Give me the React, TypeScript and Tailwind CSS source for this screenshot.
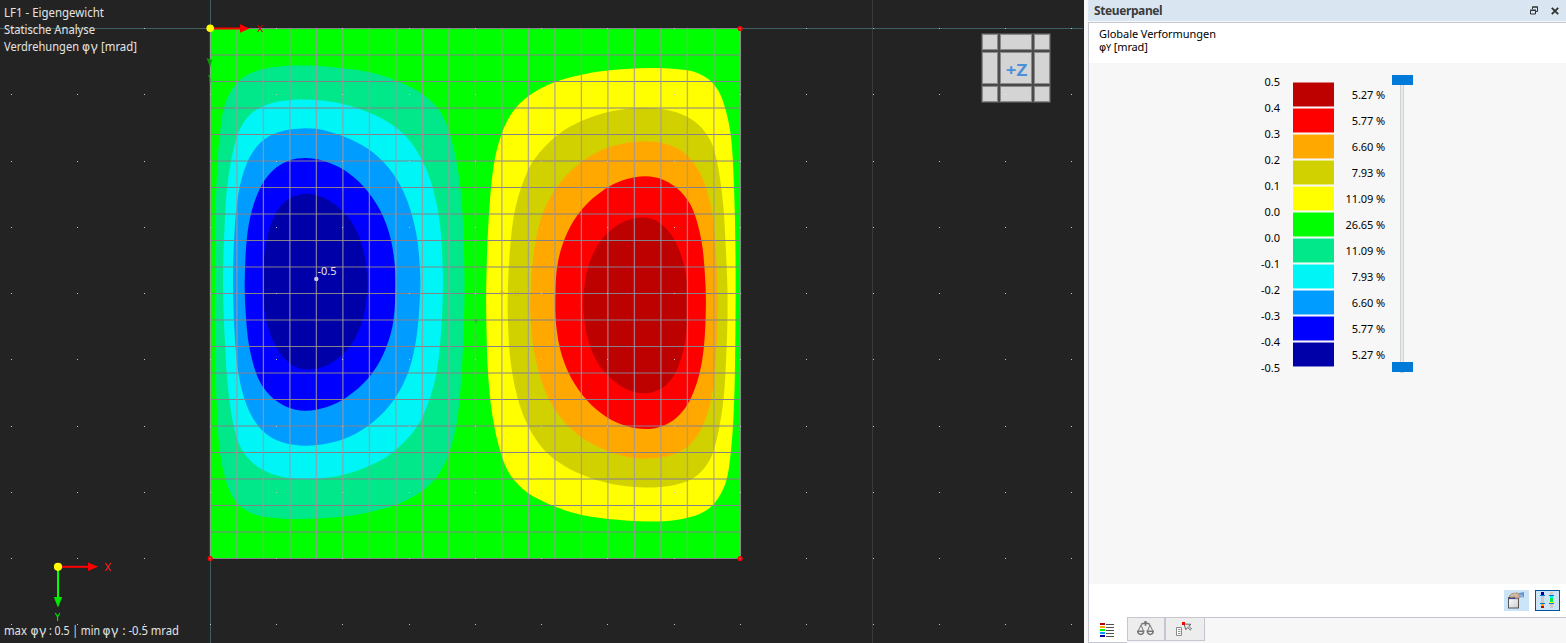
import React from "react";

type Pt = [number, number];

const CONTOURS: { cold: string; warm: string; pts: Pt[] }[] = [
  {
    cold: "#00e88a",
    warm: "#ffff00",
    pts: [
      [215, 290], [215.6, 220], [217, 172], [220, 133], [225, 104], [236, 84], [250, 73.5], [273, 67.3], [302, 65.5], [333, 67.2],
      [370, 72.3], [397, 81], [423, 94.3], [440, 111.5], [449.5, 133], [458, 170], [462.5, 213], [464.3, 267],
      [464.3, 305], [462, 367], [457, 421], [449, 453], [438, 475], [422, 491], [397, 504.5], [370, 512], [343, 516.5],
      [300, 519], [263, 516.7], [248, 511.5], [237, 503], [228, 487], [220, 453], [216.6, 400], [215.2, 340],
    ],
  },
  {
    cold: "#00f6f6",
    warm: "#d1d100",
    pts: [
      [223, 285], [224.6, 225], [228, 180], [237, 136], [247, 118], [260, 107.5], [280, 101.2], [305, 99.5], [333, 102],
      [360, 109], [387, 121.5], [407, 137.5], [423, 162], [433, 189], [440, 225], [442.7, 267], [442.7, 297],
      [440.6, 338], [435, 380], [422, 418], [407, 439], [387, 456.5], [363, 468.5], [338, 476], [307, 479.2],
      [283, 477], [263, 470], [248, 458], [237, 439], [228.5, 393], [225, 343],
    ],
  },
  {
    cold: "#009cff",
    warm: "#ffa800",
    pts: [
      [233, 285], [234.2, 237], [238.5, 193], [247, 163], [260, 143], [278, 132.3], [305, 128.3], [325, 130.5], [350, 139],
      [373, 152.5], [393, 173.5], [407, 200], [416.5, 235], [420, 270], [420, 295], [416.5, 337], [408, 373],
      [393, 401], [373, 422], [350, 436.5], [327, 443.5], [305, 445.7], [283, 442.5], [265, 433], [250, 413],
      [240, 382], [235, 340],
    ],
  },
  {
    cold: "#0000ff",
    warm: "#ff0000",
    pts: [
      [244.7, 282], [246.7, 240], [252, 210], [262, 184.5], [275, 168.5], [290, 160.3], [305, 158], [323, 160.7],
      [343, 169.3], [363, 186], [380, 210], [390.5, 238], [395.2, 270], [395.5, 293], [392.5, 326], [383, 355],
      [368, 378.5], [347, 397], [327, 407], [305, 410.7], [287, 407], [270, 395.5], [258, 378], [249.3, 347],
      [245.7, 313],
    ],
  },
  {
    cold: "#0000a8",
    warm: "#bd0000",
    pts: [
      [262.8, 283], [264.5, 252], [270, 227], [278, 209.5], [290, 198], [307, 193.7], [325, 198.3], [343, 211.5],
      [355, 228], [363.3, 250], [367.3, 278], [366.8, 296], [362.5, 320], [353.5, 341], [341.5, 355.5], [325, 366],
      [307, 369.4], [292, 365], [278.5, 351], [270, 333], [264.5, 312],
    ],
  },
];

function smooth(p: Pt[]): string {
  const n = p.length;
  const at = (i: number) => p[(i + n) % n];
  const dist = (u: Pt, v: Pt) => Math.hypot(u[0] - v[0], u[1] - v[1]);
  let d = `M${p[0][0]} ${p[0][1]}`;
  for (let i = 0; i < n; i++) {
    const a = at(i - 1), b = at(i), c = at(i + 1), e = at(i + 2);
    const ab = dist(a, b), bc = dist(b, c), ce = dist(c, e);
    const k1 = bc / (ab + bc) / 3, k2 = bc / (bc + ce) / 3;
    d += `C${b[0] + (c[0] - a[0]) * k1} ${b[1] + (c[1] - a[1]) * k1} ${c[0] - (e[0] - b[0]) * k2} ${c[1] - (e[1] - b[1]) * k2} ${c[0]} ${c[1]}`;
  }
  return d + "Z";
}

const PATHS = CONTOURS.map((c) => ({ ...c, d: smooth(c.pts) }));
const GRID = Array.from({ length: 21 }, (_, i) => i);
const DOTS_X = Array.from({ length: 17 }, (_, i) => Math.round(11 + i * 66.27));
const DOTS_Y = Array.from({ length: 10 }, (_, i) => Math.round(28 + i * 66.27));

function Cube() {
  const cols = [[983, 14], [1001, 30], [1035, 14]];
  const rows = [[35, 14], [53, 30], [87, 14]];
  return (
    <g>
      <rect x="981" y="33" width="70" height="70" rx="1" fill="#4a4a4a" />
      {cols.map(([x, w]) =>
        rows.map(([y, h]) => (
          <rect key={`${x}-${y}`} x={x - 0.5} y={y - 0.5} width={w + 1} height={h + 1} fill="#d4d4d4" stroke="#8a8a8a" strokeWidth="1" />
        ))
      )}
      <rect x="1005" y="94" width="1" height="1" fill="#f4f4f4" />
      <text x="1005.8" y="75.5" fontSize="16" fontWeight="700" fontFamily="'Noto Sans', sans-serif" fill="#4a90d9" textLength="21.5" lengthAdjust="spacingAndGlyphs">+Z</text>
    </g>
  );
}

function Label({ x, y, w, children }: { x: number; y: number; w: number; children: string }) {
  return <text x={x} y={y} textLength={w} lengthAdjust="spacingAndGlyphs">{children}</text>;
}

function PhiGamma({ x, y }: { x: number; y: number }) {
  return (
    <>
      <text x={x} y={y} fontFamily="'DejaVu Sans', sans-serif" fontSize="12" textLength="8" lengthAdjust="spacingAndGlyphs">φ</text>
      <text x={x + 8.8} y={y} textLength="7" lengthAdjust="spacingAndGlyphs">γ</text>
    </>
  );
}

function ModelView() {
  return (
    <svg className="block h-[643px] w-[1084px]" viewBox="0 0 1084 643">
      <rect width="1084" height="643" fill="#232323" />
      <path d="M0 28.5H1083" stroke="#3f6060" />
      <path d="M210.5 0V643" stroke="#3f5c5c" />
      <path d="M872.5 0V643" stroke="#3a3a3a" />
      <rect x="210" y="28.5" width="530.5" height="530" fill="#00ff00" />
      {PATHS.map((c) => (
        <g key={c.cold}>
          <path d={c.d} fill={c.cold} />
          <path d={c.d} fill={c.warm} transform="rotate(180 475.3 293.5)" />
        </g>
      ))}
      <g stroke="#85808a">
        {GRID.map((i) => (
          <path key={i} d={`M210 ${28.5 + i * 26.5}H740.5`} />
        ))}
      </g>
      <g stroke="#a096a2" strokeWidth="1.3" strokeOpacity="0.78">
        {GRID.map((i) => (
          <path key={i} d={`M${210.4 + i * 26.5} 28V559`} />
        ))}
      </g>
      <g fill="#c4c4c4">
        {DOTS_X.map((x) => DOTS_Y.map((y) => <rect key={`${x}-${y}`} x={x} y={y} width="1" height="1" />))}
      </g>

      <g fill="#c06060" stroke="#ff0000" strokeWidth="1.7">
        <circle cx="740.2" cy="28.5" r="1.7" />
        <circle cx="740.2" cy="558.5" r="1.7" />
        <circle cx="210.2" cy="558.5" r="1.7" />
      </g>

      <path d="M206.5 58L212 60L210 67Z" fill="#079b07" />
      <path d="M208.5 75L210 78V82" stroke="#00b900" fill="none" />
      <path d="M473.5 319L478 320L476 324Z" fill="#2ca52c" opacity=".7" />
      <path d="M474 334L476 338L478 334M476 338V341" stroke="#55b846" fill="none" opacity=".6" />
      <path d="M501 291L505 293L501 295ZM515 291L519 296M519 291L515 296" fill="#c6ad20" stroke="#c6ad20" opacity=".6" />

      <path d="M212 28.5H242" stroke="#ff0000" strokeWidth="2" />
      <path d="M240 24.3L249.5 28.5L240 32.7Z" fill="#ff0000" />
      <path d="M257.5 25L262.5 32M262.5 25L257.5 32" stroke="#e00000" strokeWidth="1.1" />
      <circle cx="210.2" cy="28.3" r="3.8" fill="#ffff00" />

      <path d="M60 566.8H90" stroke="#ff0000" strokeWidth="2" />
      <path d="M88 562.5L98 566.8L88 571Z" fill="#ff0000" />
      <path d="M58 570V600" stroke="#00ff00" strokeWidth="2" />
      <path d="M53.8 597H62.2L58 607.5Z" fill="#00e800" />
      <circle cx="58" cy="566.8" r="4.1" fill="#ffff00" />
      <path d="M105.5 563L110.8 571M110.8 563L105.5 571" stroke="#ff2020" strokeWidth="1.1" />
      <path d="M55.3 613L57.6 617L59.8 613M57.6 617V621" stroke="#00e800" strokeWidth="1.1" fill="none" />

      <circle cx="316.3" cy="279" r="2.2" fill="#d7c6e0" />
      <g fontFamily="'Noto Sans', sans-serif" fontSize="12" fill="#e4e4e4">
        <text x="317.5" y="275" fontSize="11" textLength="19" lengthAdjust="spacingAndGlyphs">-0.5</text>
        <Label x={4} y={17} w={100}>LF1 - Eigengewicht</Label>
        <Label x={4} y={34} w={91}>Statische Analyse</Label>
        <Label x={4} y={51} w={75}>Verdrehungen</Label>
        <PhiGamma x={82} y={51} />
        <Label x={101} y={51} w={36}>[mrad]</Label>
        <Label x={4} y={635} w={23}>max</Label>
        <PhiGamma x={30.5} y={635} />
        <Label x={49} y={635} w={51}>: 0.5 | min</Label>
        <PhiGamma x={102.5} y={635} />
        <Label x={122.5} y={635} w={56.5}>: -0.5 mrad</Label>
      </g>
      <Cube />
    </svg>
  );
}

const BANDS = [
  { from: "0.5", pct: "5.27 %", fill: "bg-[#bd0000]" },
  { from: "0.4", pct: "5.77 %", fill: "bg-[#ff0000]" },
  { from: "0.3", pct: "6.60 %", fill: "bg-[#ffa800]" },
  { from: "0.2", pct: "7.93 %", fill: "bg-[#d1d100]" },
  { from: "0.1", pct: "11.09 %", fill: "bg-[#ffff00]" },
  { from: "0.0", pct: "26.65 %", fill: "bg-[#00ff00]" },
  { from: "0.0", pct: "11.09 %", fill: "bg-[#00e88a]" },
  { from: "-0.1", pct: "7.93 %", fill: "bg-[#00f6f6]" },
  { from: "-0.2", pct: "6.60 %", fill: "bg-[#009cff]" },
  { from: "-0.3", pct: "5.77 %", fill: "bg-[#0000ff]" },
  { from: "-0.4", pct: "5.27 %", fill: "bg-[#0000a8]" },
];

function Legend() {
  return (
    <div className="flex pl-[161px] pt-3 text-[11px] leading-[26px]">
      <div className="-mt-[6px] w-[30px] text-right">
        {BANDS.map((b, i) => (
          <div key={i} className="h-[26px]">{b.from}</div>
        ))}
        <div className="h-[26px]">-0.5</div>
      </div>
      <div className="ml-[13px] mt-[7px] w-[41px]">
        {BANDS.map((b, i) => (
          <div key={i} className={`mb-px h-[25px] border-y border-white/50 ${b.fill}`} />
        ))}
      </div>
      <div className="mt-[7px] w-[51px] text-right tracking-[-0.1px]">
        {BANDS.map((b, i) => (
          <div key={i} className="h-[26px]">{b.pct}</div>
        ))}
      </div>
      <div className="ml-[7px] flex h-[298px] w-[21px] flex-col items-center">
        <div className="h-[10px] w-full shrink-0 bg-[#007ad9]" />
        <div className="mr-px w-1 flex-1 border-x border-[#cfd3d3] bg-[#e6eaea]" />
        <div className="h-[10px] w-full shrink-0 bg-[#007ad9]" />
        <div className="mr-px h-px w-1 bg-[#cfd3d3]" />
      </div>
    </div>
  );
}

function BandsIcon() {
  const c = ["#b80000", "#ffa800", "#00ff00", "#009cff", "#0000a8"];
  return (
    <svg className="h-[15px] w-[14px]" viewBox="0 0 14 15" shapeRendering="crispEdges">
      {c.map((f, i) => (
        <g key={f}>
          <rect x="0" y={i * 3} width="5" height="2" fill={f} />
          <rect x="6" y={i * 3 + 1} width="8" height="1" fill="#505050" />
        </g>
      ))}
    </svg>
  );
}

function ScalesIcon() {
  return (
    <svg className="h-[16px] w-[17px]" viewBox="0 0 17 16" fill="none" stroke="#777">
      <path d="M8.5 0V5M4 3.5C6 1.8 11 1.8 13 3.5" strokeWidth="1.5" />
      <path d="M4 4L1.2 10M4 4L6.5 10M13 4L10.5 10M13 4L15.8 10" strokeWidth="1" />
      <path d="M.6 10.2H6.8C6.3 14.5 1.2 14.5 .6 10.2ZM10.2 10.2H16.4C15.8 14.5 10.8 14.5 10.2 10.2Z" strokeWidth="1.4" />
      <circle cx="8.5" cy="1.4" r="1.3" fill="#777" stroke="none" />
    </svg>
  );
}

function PickIcon() {
  return (
    <svg className="h-[15px] w-[16px]" viewBox="0 0 16 15" fill="none">
      <path d="M.5 5.5H5.5V13.5H.5Z" fill="#fff" stroke="#8a8a8a" />
      <path d="M2 7.5H4.5M2 9.5H4.5M2 11.5H4.5" stroke="#777" strokeWidth=".8" />
      <path d="M8 2L15 2.3L12.8 4.2L15.5 6.9L14.3 8L11.6 5.5L9.8 7.7Z" fill="#e6e6e6" stroke="#666" />
      <rect x="6" y="0" width="3" height="3" fill="#ff0000" />
    </svg>
  );
}

function HandIcon() {
  return (
    <svg className="h-[17px] w-[17px]" viewBox="0 0 17 17">
      <defs>
        <linearGradient id="sheet" x2="1" y2="1">
          <stop stopColor="#fff" />
          <stop offset="1" stopColor="#ccc" />
        </linearGradient>
      </defs>
      <rect x=".5" y="5.5" width="10" height="10.5" fill="url(#sheet)" stroke="#555" />
      <path d="M1 6.5H10" stroke="#4442a4" strokeWidth="1.2" />
      <path d="M1 4L4 1.5L9 .8L13 2.5L12 5.5L8 7L6.5 5L3 5.7Z" fill="#c4ab95" stroke="#8b7767" strokeWidth=".5" />
      <path d="M3 4L6.5 2.8L9.5 4.5M6 1.8L9.5 3" stroke="#e0cab5" fill="none" strokeWidth=".8" />
      <path d="M11 1L16 0V5.5L12 5Z" fill="#6795ce" />
      <path d="M12 3L15 4.5" stroke="#b8cde7" />
    </svg>
  );
}

function RangeIcon() {
  return (
    <svg className="h-[17px] w-[17px]" viewBox="0 0 17 17" shapeRendering="crispEdges">
      <rect x="2" y="0" width="3" height="3" fill="#000099" />
      <rect x="2" y="3" width="3" height="9" fill="#cacaca" />
      <rect x="2" y="12" width="3" height="2" fill="#ffa800" />
      <rect x="2" y="14" width="3" height="2" fill="#bd0000" />
      <rect x="1" y="3" width="5" height="1" fill="#0078c8" />
      <rect x="1" y="11" width="5" height="1" fill="#0078c8" />
      <rect x="11" y="0" width="3" height="16" fill="#cacaca" />
      <rect x="11" y="4" width="3" height="2" fill="#00eeee" />
      <rect x="11" y="6" width="3" height="4" fill="#00ee40" />
      <rect x="11" y="10" width="3" height="1" fill="#ffff00" />
      <rect x="10" y="3" width="5" height="1" fill="#0078c8" />
      <rect x="10" y="11" width="5" height="1" fill="#0078c8" />
    </svg>
  );
}

function ControlPanel() {
  return (
    <aside className="flex h-full flex-1 flex-col text-black">
      <header className="mb-px flex h-[21px] shrink-0 items-center bg-[#d9e6f2] pl-[6px] pr-[7px] text-[#3b3b3b]">
        <h1 className="flex-1 text-[12px] font-bold leading-[21px] tracking-[-0.4px]">Steuerpanel</h1>
        <svg className="mr-[13px] h-[9px] w-[8px]" viewBox="0 0 8 9" fill="none" stroke="#303030">
          <path d="M2.5 3V1H7.5V5.5H6M2 1H8" />
          <path d="M.5 4.5H5.5V8H.5ZM0 4H6" />
        </svg>
        <svg className="h-2 w-2" viewBox="0 0 8 8" stroke="#303030" strokeWidth="1.8">
          <path d="M.8 .8L7.2 7.2M7.2 .8L.8 7.2" />
        </svg>
      </header>
      <div className="flex min-h-0 flex-1 flex-col border-l border-t border-[#c6c6d0]">
        <div className="h-[40px] shrink-0 bg-white pl-[10px] pt-[4px] text-[11px] leading-[13px]">
          <div className="tracking-[-0.06px]">Globale Verformungen</div>
          <div className="tracking-[-0.15px]"><span className="font-['DejaVu_Sans',sans-serif] leading-none">φ</span><span className="text-[9px] leading-none">Y</span> [mrad]</div>
        </div>
        <div className="h-[521px] shrink-0 bg-[#f7f7f7]">
          <Legend />
        </div>
        <div className="flex h-[33px] shrink-0 items-center justify-end gap-[6px] bg-white pr-[6px]">
          <button className="flex h-[21px] w-[25px] items-center justify-center bg-[#cce4f7]"><HandIcon /></button>
          <button className="flex h-[21px] w-[25px] items-center justify-center border border-[#005499] bg-[#cce4f7]"><RangeIcon /></button>
        </div>
        <nav className="flex flex-1 items-start bg-[#f7f7f7]">
          <button className="flex h-[26px] w-[38px] items-center justify-center border-b border-[#c6c6d0] bg-white pr-[2px] pt-px"><BandsIcon /></button>
          <button className="flex h-[24px] w-[38px] items-center justify-center border border-[#c6c6d0] bg-[#ededed] pr-[2px]"><ScalesIcon /></button>
          <button className="flex h-[24px] w-[40px] items-center justify-center border border-[#c6c6d0] bg-[#ededed] pr-[2px]"><PickIcon /></button>
          <span className="h-px flex-1 bg-[#c6c6d0]" />
        </nav>
      </div>
    </aside>
  );
}

export default function App() {
  return (
    <main className="flex h-[643px] w-[1566px] overflow-hidden bg-[#f7f7f7] font-['Noto_Sans',sans-serif]">
      <section className="w-[1088px] shrink-0 bg-[#f7f7f7]">
        <ModelView />
      </section>
      <ControlPanel />
    </main>
  );
}
